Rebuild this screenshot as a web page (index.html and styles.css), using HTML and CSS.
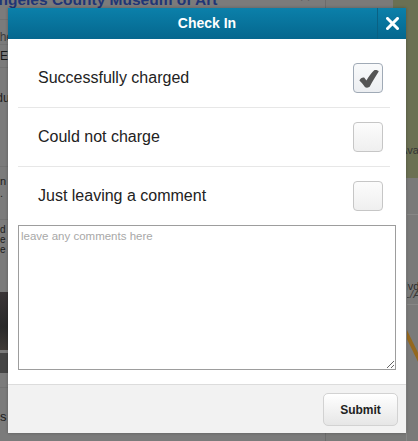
FILE: index.html
```html
<!DOCTYPE html>
<html lang="en">
<head>
<meta charset="utf-8">
<title>Check In</title>
<link rel="stylesheet" href="styles.css">
</head>
<body>
<div class="page">
  <aside class="sidebar">
    <div class="sb-head">
      <h1 class="sb-title">Los Angeles County Museum of Art</h1>
      <span class="sb-close">×</span>
    </div>
    <div class="sb-row sb-sub"><span class="cut13">Other</span></div>
    <div class="sb-row sb-cap">EVENTS</div>
    <div class="sb-row sb-block"><span class="cut10">Schedule</span></div>
    <div class="sb-row sb-block2"><span>n</span><span>.</span></div>
    <div class="sb-row sb-block3"><span>d</span><span>e</span><span>e</span></div>
    <div class="sb-photo"></div>
    <div class="sb-bar"></div>
    <div class="sb-row sb-last"><span>s</span></div>
  </aside>
  <div class="map">
    <div class="park"></div>
    <span class="map-label l1">Ava</span>
    <span class="map-label l2">d Blvd</span>
    <span class="map-label l3 it">L/A</span>
    <div class="road"></div>
    <div class="street s1"></div>
    <div class="street s2"></div>
    <div class="street s3"></div>
  </div>
</div>

<div class="modal">
  <div class="modal-head">
    <span class="head-spacer"></span>
    <h2 class="modal-title">Check In</h2>
    <button class="modal-close" aria-label="Close">
      <svg width="13" height="13" viewBox="0 0 13 13"><path d="M1.5 1.5 L11.5 11.5 M11.5 1.5 L1.5 11.5" stroke="#fff" stroke-width="3" stroke-linecap="square"/></svg>
    </button>
  </div>
  <div class="modal-body">
    <div class="opt">
      <span class="opt-label">Successfully charged</span>
      <span class="check checked">
        <svg width="20" height="18" viewBox="0 0 20 18"><path d="M0.4 10.4 C1.4 8.2 3.8 6.9 5.4 7.7 L7.4 10.6 C9.8 6.6 12.6 2.8 15.2 0.3 C16.8 -0.2 19.3 0.4 19.7 1.5 C16.6 6.2 13.4 11.6 10.8 16.5 C9.8 17.9 6.8 18 5.9 16.9 C4.3 14.5 2.4 12.1 0.4 10.4 Z" fill="#555"/></svg>
      </span>
    </div>
    <div class="opt">
      <span class="opt-label">Could not charge</span>
      <span class="check"></span>
    </div>
    <div class="opt">
      <span class="opt-label">Just leaving a comment</span>
      <span class="check"></span>
    </div>
    <textarea class="comments" placeholder="leave any comments here"></textarea>
  </div>
  <div class="modal-foot">
    <button class="submit">Submit</button>
  </div>
</div>
</body>
</html>
```

FILE: styles.css
```css
html, body {
  margin: 0;
  padding: 0;
}
body {
  width: 418px;
  height: 441px;
  overflow: hidden;
  position: relative;
  background: #7b7b7b;
  font-family: "Liberation Sans", Helvetica, Arial, sans-serif;
}

/* dimmed background page */
.page {
  display: flex;
  height: 441px;
}
.sidebar {
  width: 325px;
  flex: none;
  background: #7b7b7b;
  border-right: 1px solid #6c6c6c;
  overflow: hidden;
  color: #1d1d1d;
}
.sb-head {
  height: 20px;
  display: flex;
  overflow: hidden;
  border-bottom: 1px solid #727272;
  box-sizing: border-box;
}
.sb-title {
  margin: -9px 0 0 -44px;
  font-size: 15.5px;
  line-height: 18px;
  font-weight: bold;
  color: #1f3576;
  white-space: nowrap;
}
.sb-close {
  margin: -14px 14px 0 auto;
  font-size: 20px;
  color: #4a4a4a;
  line-height: 20px;
}
.sb-row {
  border-bottom: 1px solid #727272;
  box-sizing: border-box;
  white-space: nowrap;
}
.sb-sub {
  height: 25px;
  font-size: 12px;
  color: #3c3c3c;
  padding-top: 11px;
  line-height: 12px;
}
.cut13 { margin-left: -13px; }
.cut10 { margin-left: -31px; }
.sb-cap {
  height: 23px;
  font-size: 12px;
  line-height: 12px;
  padding-top: 5px;
  color: #161616;
}
.sb-block {
  height: 99px;
  font-size: 12px;
  line-height: 12px;
  padding-top: 24px;
}
.sb-block2 {
  height: 53px;
  font-size: 11px;
  line-height: 12px;
  padding-top: 8px;
  display: flex;
  flex-direction: column;
}
.sb-block3 {
  height: 66px;
  font-size: 10px;
  line-height: 10px;
  padding-top: 5px;
  display: flex;
  flex-direction: column;
  border-bottom: 0;
}
.sb-photo {
  height: 58px;
  margin-top: 6px;
  background: linear-gradient(#3a3537, #2a2a2a 60%, #3f3a36);
}
.sb-bar {
  height: 20px;
  margin-top: 3px;
  background: #454545;
}
.sb-last {
  height: 60px;
  border-top: 1px solid #727272;
  margin-top: 14px;
  padding-top: 21px;
  font-size: 13px;
  border-bottom: 0;
}

.map {
  flex: 1;
  position: relative;
  overflow: hidden;
  background: #7a7a79;
}
.park {
  position: absolute;
  left: 67px;
  top: 0;
  right: 0;
  height: 178px;
  background: #6b7053;
}
.map-label {
  position: absolute;
  font-size: 11px;
  line-height: 12px;
  color: #2c2c2c;
}
.l1 { left: 74px; top: 144px; color: #333; }
.l2 { left: 72px; top: 268px; }
.l3 { left: 78px; top: 288px; }
.it { font-style: italic; color: #3a3a3a; }
.road {
  position: absolute;
  left: 86px;
  top: 326px;
  width: 4px;
  height: 46px;
  background: #94681f;
  transform: rotate(-26deg);
}
.street {
  position: absolute;
  background: #878786;
}
.s1 { left: 60px; right: 0; top: 214px; height: 1px; }
.s2 { left: 60px; right: 0; top: 304px; height: 1px; }
.s3 { left: 80px; width: 1px; top: 190px; bottom: 0; }

/* modal */
.modal {
  position: absolute;
  left: 8px;
  top: 8px;
  width: 398px;
  height: 425px;
  background: #fff;
  display: flex;
  flex-direction: column;
  box-shadow: 0 0 3px rgba(0, 0, 0, 0.25);
}
.modal-head {
  height: 31px;
  flex: none;
  display: flex;
  align-items: stretch;
  background: linear-gradient(#0b80aa, #05678e);
}
.head-spacer {
  width: 29px;
}
.modal-title {
  flex: 1;
  margin: 0;
  text-align: center;
  color: #fff;
  font-size: 14px;
  font-weight: bold;
  line-height: 31px;
}
.modal-close {
  width: 29px;
  padding: 0;
  border: 0;
  border-left: 1px solid #0a6184;
  background: transparent;
  display: flex;
  align-items: center;
  justify-content: center;
}
.modal-body {
  flex: 1;
  padding: 10px 10px 0;
}
.opt {
  height: 58px;
  display: flex;
  align-items: center;
  padding: 0 7px 0 20px;
  margin-right: 6px;
  border-bottom: 1px solid #e7e7e7;
}
.opt:nth-child(3) {
  border-bottom: 0;
}
.opt-label {
  flex: 1;
  font-size: 16px;
  color: #222;
}
.check {
  width: 30px;
  height: 30px;
  box-sizing: border-box;
  border: 1px solid #c6c6c6;
  border-radius: 4px;
  background: linear-gradient(#fcfcfc, #efefef);
  display: flex;
  align-items: center;
  justify-content: center;
}
.check.checked {
  border-color: #a0aab6;
  background: linear-gradient(#f9fafb, #eceef1);
}
.check.checked svg {
  margin-left: 1px;
  margin-top: 1px;
}
.comments {
  display: block;
  box-sizing: border-box;
  width: 378px;
  height: 145px;
  margin: 0;
  border: 1px solid #9d9d9d;
  padding: 4px 2px;
  font-family: "Liberation Sans", Helvetica, Arial, sans-serif;
  font-size: 11.5px;
  color: #333;
  outline: none;
}
.comments::placeholder {
  color: #a8a8a8;
}
.modal-foot {
  box-sizing: border-box;
  height: 49px;
  flex: none;
  border-top: 1px solid #dcdcdc;
  background: #f2f2f2;
  display: flex;
  justify-content: flex-end;
  align-items: flex-start;
  padding: 8px 8px 0;
}
.submit {
  width: 75px;
  height: 33px;
  border: 1px solid #d2d2d2;
  border-radius: 5px;
  background: linear-gradient(#ffffff, #e6e6e6);
  font-family: "Liberation Sans", Helvetica, Arial, sans-serif;
  font-size: 12px;
  font-weight: bold;
  color: #222;
  padding: 0;
}
```
